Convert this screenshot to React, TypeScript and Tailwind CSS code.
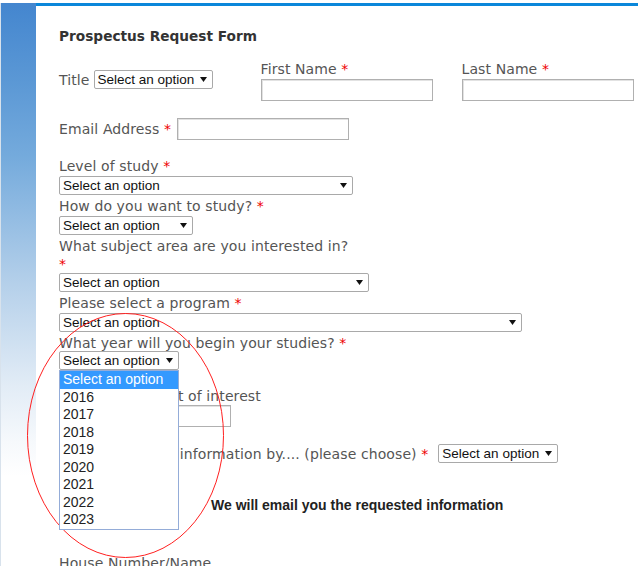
import React from "react";

const LABEL = "font-['DejaVu_Sans','Verdana',sans-serif] text-[14px] leading-[18px] tracking-[0.1px] text-[#555]";
const CONTROL = "font-['Liberation_Sans',Arial,sans-serif] text-[13.5px] text-[#111]";

const YEARS = ["2016", "2017", "2018", "2019", "2020", "2021", "2022", "2023"];

function Star() {
  return <span className="text-[#e00]"> *</span>;
}

function Arrow() {
  return (
    <svg width="7" height="5" viewBox="0 0 7 5" aria-hidden className="shrink-0">
      <path d="M0 0H7L3.5 5Z" fill="#111" />
    </svg>
  );
}

function Select({ className = "" }: { className?: string }) {
  return (
    <div
      className={`flex h-[19px] items-center justify-between rounded-[2px] border border-[#a9a9a9] bg-white pl-[3px] pr-[5px] leading-[17px] ${CONTROL} ${className}`}
    >
      <span className="whitespace-nowrap">Select an option</span>
      <Arrow />
    </div>
  );
}

function Input({ className = "" }: { className?: string }) {
  return (
    <div
      className={`h-[22px] w-[172px] border border-[#b0b0b0] bg-white shadow-[inset_1px_1px_0_#e2e2e2] ${className}`}
    />
  );
}

function YearDropdown() {
  return (
    <div className="absolute left-0 top-full z-10 w-[120px] border border-[#94acd8] bg-white text-[14px]">
      <div className="bg-[#3399ff] pl-[3px] leading-[17.5px] text-white">Select an option</div>
      {YEARS.map((y) => (
        <div key={y} className="pl-[3px] leading-[17.5px] text-[#222]">
          {y}
        </div>
      ))}
    </div>
  );
}

export default function App() {
  return (
    <div className="relative h-[566px] w-[640px] overflow-hidden bg-white">
      <div className="flex h-full pt-[3px]">
        <div className="w-[36px] shrink-0 border-l border-[#d8e2ec] bg-[linear-gradient(to_bottom,#4486cf_0%,#5b98d5_14%,#74aadc_27%,#b5d0ea_50%,#e2ecf6_68%,#f6f9fc_78%,#ffffff_84%)]" />

        <div className="mr-[2px] flex-1 border-t-[3px] border-[#0a87da] pl-[23px]">
          <h1 className="mt-[22px] font-['DejaVu_Sans','Verdana',sans-serif] text-[13.7px] font-bold leading-[17px] text-[#333]">
            Prospectus Request Form
          </h1>

          <div className="mt-[15px] flex items-start">
            <div className="mt-[10px] flex items-center gap-[4px]">
              <span className={LABEL}>Title</span>
              <Select className="w-[119px]" />
            </div>
            <div className="ml-[48px]">
              <div className={`${LABEL} mb-[1px]`}>
                First Name<Star />
              </div>
              <Input />
            </div>
            <div className="ml-[29px]">
              <div className={`${LABEL} mb-[1px]`}>
                Last Name<Star />
              </div>
              <Input />
            </div>
          </div>

          <div className="mt-[17px] flex items-center">
            <span className={LABEL}>
              Email Address<Star />
            </span>
            <Input className="ml-[6px]" />
          </div>

          <div className="mt-[17px] flex flex-col items-start">
            <div className={LABEL}>
              Level of study<Star />
            </div>
            <Select className="mt-[1px] w-[294px]" />

            <div className={`${LABEL} mt-[2px]`}>
              How do you want to study?<Star />
            </div>
            <Select className="mt-[1px] w-[134px]" />

            <div className={`${LABEL} mt-[2px]`}>
              What subject area are you interested in?
              <br />
              <span className="text-[#e00]">*</span>
            </div>
            <Select className="w-[310px]" />

            <div className={`${LABEL} mt-[2px]`}>
              Please select a program<Star />
            </div>
            <Select className="mt-[1px] w-[463px]" />

            <div className={`${LABEL} mt-[2px]`}>
              What year will you begin your studies?<Star />
            </div>
            <div className={`relative -mt-[1px] ${CONTROL}`}>
              <Select className="w-[120px]" />
              <YearDropdown />
            </div>

            <div className={`${LABEL} mt-[17px]`}>Course or subject of interest</div>
            <Input />
          </div>

          <div className="mt-[17px] flex items-center">
            <span className={LABEL}>
              Send me further information by.... (please choose)<Star />
            </span>
            <Select className="ml-[10px] w-[120px]" />
          </div>

          <p className="ml-[152px] mt-[34px] font-['Liberation_Sans',Arial,sans-serif] text-[14px] font-bold leading-[17px] text-[#222]">
            We will email you the requested information
          </p>

          <div className={`${LABEL} mt-[40px]`}>House Number/Name</div>
        </div>
      </div>

      <svg
        className="pointer-events-none absolute left-0 top-0"
        width="640"
        height="566"
        viewBox="0 0 640 566"
        aria-hidden
      >
        <ellipse cx="125.5" cy="435.5" rx="98" ry="122" fill="none" stroke="#ff2020" strokeWidth="1" />
      </svg>
    </div>
  );
}
